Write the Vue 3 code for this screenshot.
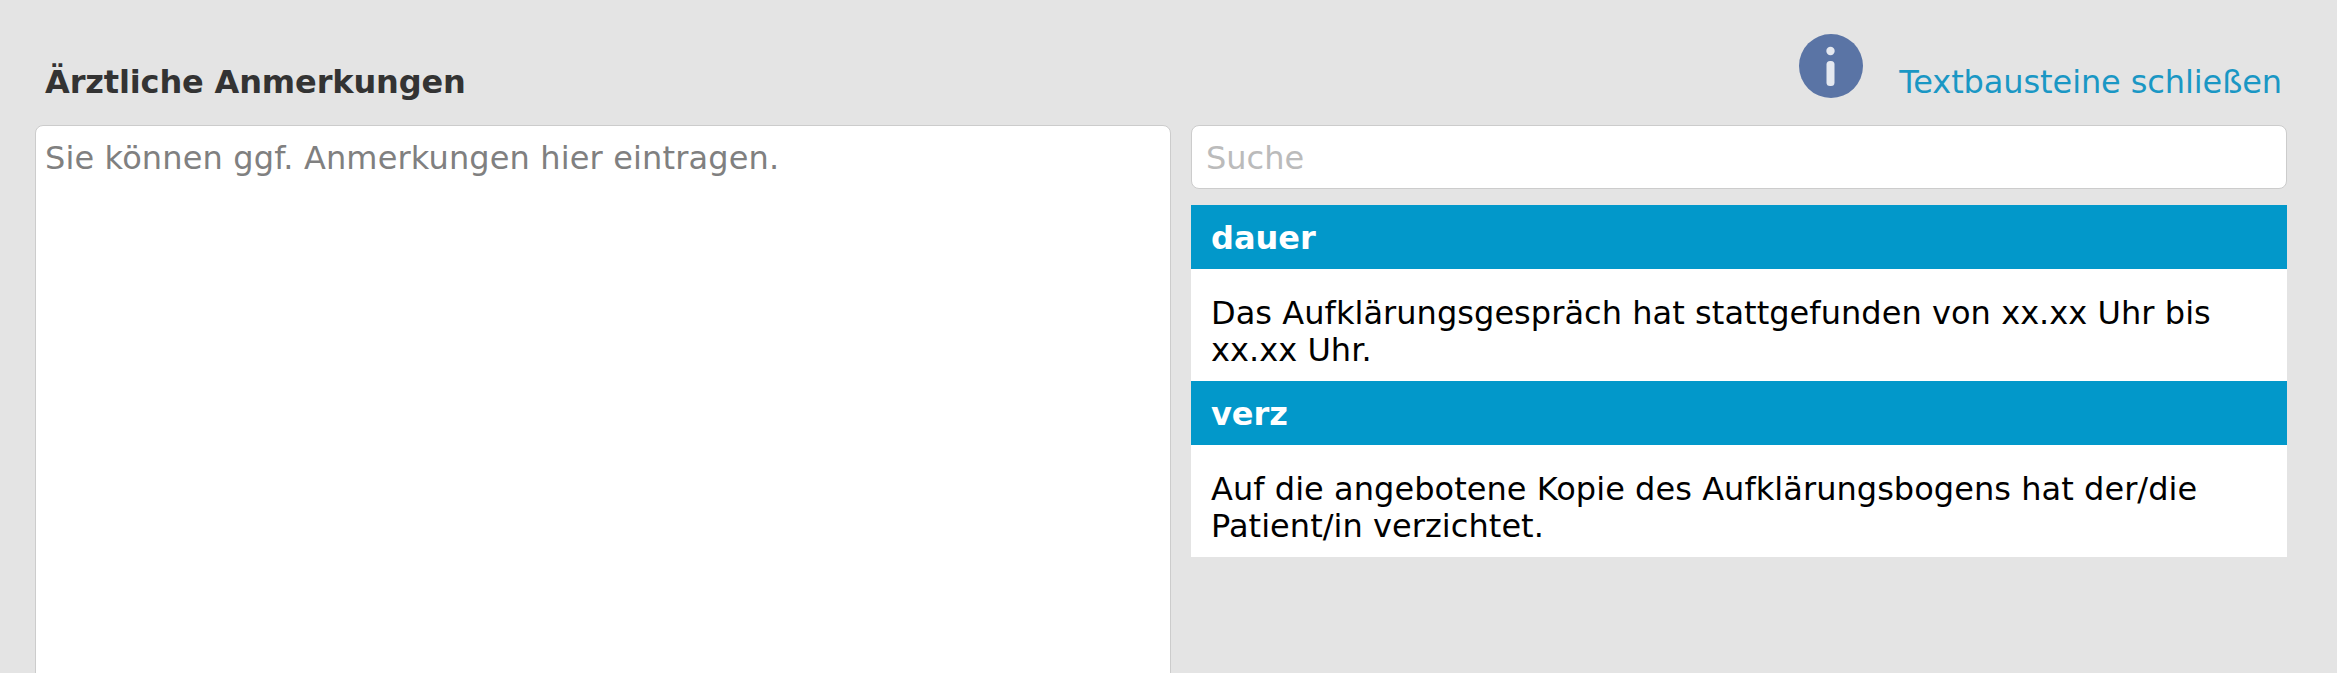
<script setup>
const blocks = [
  { key: 'dauer', text: 'Das Aufklärungsgespräch hat stattgefunden von xx.xx Uhr bis xx.xx Uhr.' },
  { key: 'verz', text: 'Auf die angebotene Kopie des Aufklärungsbogens hat der/die Patient/in verzichtet.' },
]
</script>

<template>
  <div class="page">
    <div class="columns">
      <section class="notes">
        <h2 class="title">Ärztliche Anmerkungen</h2>
        <textarea class="area" placeholder="Sie können ggf. Anmerkungen hier eintragen."></textarea>
      </section>
      <section class="side">
        <div class="actions">
          <svg class="info" viewBox="0 0 64 64" aria-hidden="true">
            <circle cx="32" cy="32" r="32" fill="#5a74a5" />
            <circle cx="31.5" cy="17" r="4.2" fill="#e4e8f0" />
            <rect x="27.5" y="27" width="8" height="25" rx="3.5" fill="#e4e8f0" />
          </svg>
          <a class="link">Textbausteine schließen</a>
        </div>
        <input class="search" placeholder="Suche" />
        <div class="list">
          <article v-for="b in blocks" :key="b.key">
            <div class="head">{{ b.key }}</div>
            <div class="body">{{ b.text }}</div>
          </article>
        </div>
      </section>
    </div>
  </div>
</template>

<style>
html, body { margin: 0; background: #e4e4e4; overflow: hidden; }
</style>

<style scoped>
.page {
  height: 673px;
  overflow: hidden;
  box-sizing: border-box;
  padding: 33px 50px 0 35px;
  background: #e4e4e4;
  font-family: "DejaVu Sans", sans-serif;
  font-size: 32px;
}
.columns {
  display: grid;
  grid-template-columns: 1136px 1096px;
  column-gap: 20px;
}
.title {
  margin: 0;
  height: 92px;
  box-sizing: border-box;
  padding: 31px 0 0 10px;
  font-size: 32px;
  line-height: 37px;
  font-weight: 700;
  letter-spacing: -0.14px;
  color: #333;
}
.area {
  display: block;
  width: 100%;
  height: 700px;
  box-sizing: border-box;
  padding: 14px 9px;
  border: 1px solid #ccc;
  border-radius: 8px;
  background: #fff;
  font: 32px/37px "DejaVu Sans", sans-serif;
  letter-spacing: 0.14px;
  resize: none;
  outline: none;
}
.area::placeholder { color: #808080; opacity: 1; }
.actions {
  display: flex;
  justify-content: flex-end;
  align-items: flex-start;
  height: 92px;
  gap: 36px;
  padding-right: 5px;
}
.info { width: 64px; height: 64px; flex: none; margin-top: 1px; }
.link {
  padding-top: 31px;
  line-height: 37px;
  letter-spacing: -0.1px;
  color: #1a97c4;
}
.search {
  display: block;
  width: 100%;
  height: 64px;
  box-sizing: border-box;
  padding: 2px 14px 0;
  border: 1px solid #ccc;
  border-radius: 8px;
  background: #fff;
  font: 32px "DejaVu Sans", sans-serif;
  outline: none;
}
.search::placeholder { color: #bbb; opacity: 1; }
.list { margin-top: 16px; }
.head {
  height: 64px;
  box-sizing: border-box;
  padding: 15px 20px 0;
  background: #0298ca;
  color: #fff;
  font-weight: 700;
  line-height: 37px;
}
.body {
  height: 112px;
  box-sizing: border-box;
  padding: 26px 20px 0;
  background: #fff;
  color: #000;
  line-height: 37px;
  letter-spacing: 0.05px;
}
</style>
